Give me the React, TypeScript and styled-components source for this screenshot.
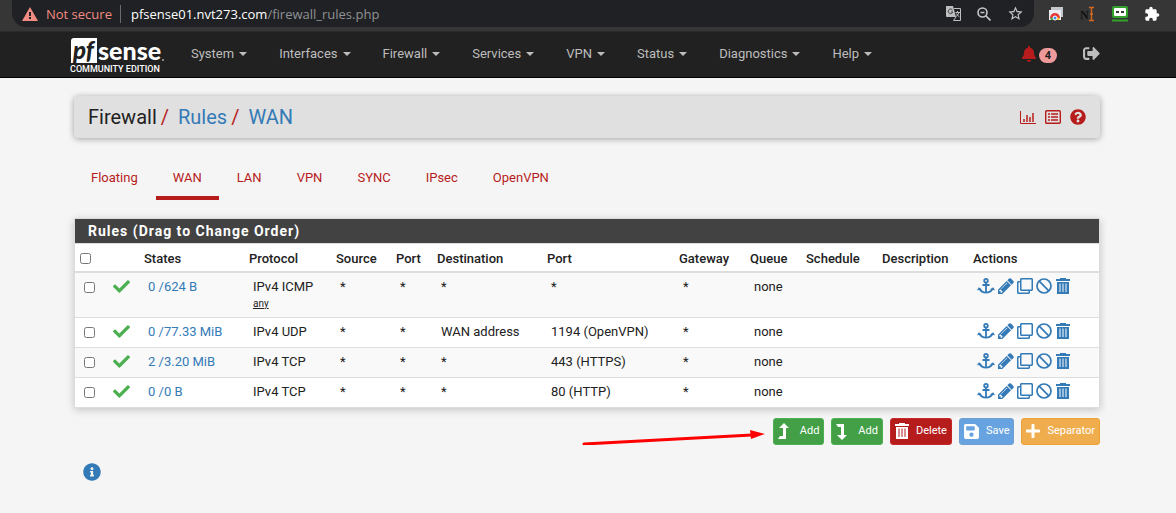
import React from "react";
import styled, { createGlobalStyle } from "styled-components";
import { FaRegClone, FaBell, FaSignOutAlt, FaQuestionCircle, FaInfoCircle, FaSave, FaCheck, FaPlus } from "react-icons/fa";
import { MdExtension, MdStarBorder } from "react-icons/md";

const red = "#b71c1c";
const blue = "#337ab7";

const Global = createGlobalStyle`
  * { box-sizing: border-box; }
  body { margin: 0; background: #f5f5f5; color: #212121; font: 13px/18px Roboto, sans-serif; }
  a { text-decoration: none; color: ${blue}; }
  svg { display: block; flex: none; }
`;

const BrowserBar = styled.div`
  display: flex;
  align-items: flex-start;
  height: 32px;
  padding: 0 16px 0 12px;
  background: #363636;
  border-bottom: 1px solid #2b2b2b;
`;
const AddressBar = styled.div`
  flex: 1;
  display: flex;
  align-items: center;
  height: 27px;
  padding: 0 10px;
  background: #202124;
  border-radius: 0 0 14px 14px;
  font: 13px/18px "Open Sans", sans-serif;
`;
const Insecure = styled.span`
  display: flex;
  align-items: center;
  gap: 8px;
  padding-right: 8px;
  margin-right: 10px;
  border-right: 1px solid #6a6b6e;
  color: #f28b82;
`;
const Url = styled.span`
  flex: 1;
  color: #ffffff;
  span { color: #8f9195; }
`;
const BarIcons = styled.div`
  display: flex;
  align-items: center;
  height: 27px;
  gap: 16px;
  color: #c6c7c9;
`;
const Extensions = styled(BarIcons)`
  padding-left: 14px;
`;

const NavBar = styled.nav`
  display: flex;
  align-items: flex-start;
  height: 46px;
  padding: 0 76px 0 69px;
  background: #212121;
  border-bottom: 1px solid #000;
`;
const Brand = styled.a`
  width: 96px;
  margin-right: 26px;
`;
const Menu = styled.ul`
  flex: 1;
  display: flex;
  gap: 32px;
  margin: 0;
  padding: 13px 0 0;
  list-style: none;
`;
const MenuLink = styled.a`
  display: flex;
  align-items: center;
  gap: 5px;
  color: #bdbdbd;
  &::after {
    content: "";
    border: 4px solid transparent;
    border-top-color: #bdbdbd;
    border-bottom: 0;
  }
`;
const NavTools = styled.div`
  display: flex;
  align-items: center;
  gap: 26px;
  padding-top: 12px;
`;
const Alerts = styled.a`
  display: flex;
  align-items: center;
  gap: 2px;
  color: ${red};
`;
const Badge = styled.span`
  margin-top: 4px;
  padding: 0 6px;
  border-radius: 8px;
  background: #ef9a9a;
  color: #212121;
  font-size: 11px;
  font-weight: 700;
  line-height: 15px;
`;

const Page = styled.main`
  padding: 18px 76px 20px 74px;
`;
const Crumbs = styled.header`
  display: flex;
  align-items: center;
  justify-content: space-between;
  height: 42px;
  padding: 0 14px;
  border-radius: 4px;
  background: #e0e0e0;
  box-shadow: 0 1px 6px rgba(0, 0, 0, 0.35);
`;
const CrumbList = styled.ol`
  display: flex;
  margin: 0;
  padding: 0;
  list-style: none;
  font-size: 20px;
  line-height: 24px;
  li + li::before {
    content: "/";
    padding: 0 9px 0 4px;
    color: ${red};
  }
`;
const CrumbTools = styled.div`
  display: flex;
  align-items: center;
  gap: 9px;
  a { color: ${red}; }
`;

const Tabs = styled.ul`
  display: flex;
  margin: 22px 0 18px;
  padding: 0;
  list-style: none;
`;
const Tab = styled.a<{ $active?: boolean }>`
  display: block;
  height: 40px;
  padding: 9px 17px 0;
  margin-right: 1px;
  border-bottom: 4px solid ${(p) => (p.$active ? red : "transparent")};
  color: ${red};
`;

const Panel = styled.section`
  border: 1px solid #ddd;
  background: #fff;
  box-shadow: 0 2px 8px rgba(0, 0, 0, 0.2);
`;
const PanelTitle = styled.h2`
  margin: 0;
  padding: 0 13px;
  background: #424242;
  color: #fff;
  font-size: 14px;
  font-weight: 700;
  line-height: 24px;
  letter-spacing: 1px;
`;
const Table = styled.table`
  width: 100%;
  table-layout: fixed;
  border-collapse: collapse;
  border-top: 1px solid #ddd;
`;
const Col = styled.col<{ $w: number }>`
  width: ${(p) => p.$w}px;
`;
const Th = styled.th`
  height: 28px;
  padding: 3px 0 0 5px;
  border-bottom: 2px solid #ddd;
  text-align: left;
  font-weight: 500;
  white-space: nowrap;
`;
const Row = styled.tr`
  &:nth-child(odd) { background: #f9f9f9; }
  & + & { border-top: 1px solid #ddd; }
`;
const Td = styled.td`
  padding: 5px 0 6px 9px;
  vertical-align: top;
  white-space: nowrap;
  small {
    display: block;
    font-size: 10px;
    line-height: 15px;
    text-decoration: underline;
  }
`;
const Check = styled.input`
  display: block;
  width: 11px;
  height: 11px;
  margin: 0;
`;
const RowCheck = styled(Check)`
  margin-top: 4px;
`;
const Actions = styled.div`
  display: flex;
  align-items: center;
  gap: 3px;
  height: 17px;
  a { display: block; }
`;

const Footer = styled.div`
  display: flex;
  justify-content: flex-end;
  gap: 7px;
  margin-top: 10px;
`;
const Btn = styled.button<{ $bg: string; $line: string }>`
  display: flex;
  align-items: center;
  gap: 6px;
  height: 27px;
  padding: 0 4px 0 3px;
  border: 1px solid ${(p) => p.$line};
  border-radius: 3px;
  background: ${(p) => p.$bg};
  color: #fff;
  font: 11px/16px Roboto, sans-serif;
  span { padding-bottom: 1px; }
`;
const AddBtn = styled(Btn)`
  gap: 11px;
`;
const InfoLink = styled.a`
  display: inline-block;
  margin: 18px 0 0 9px;
`;

const Anchor = () => (
  <svg width="18" height="16" viewBox="0 0 18 16" fill="none" stroke="currentColor" strokeWidth="1.800">
    <circle cx="9" cy="2.700" r="1.800" />
    <path d="M9 4.500V14.500M5.500 7H12.500" />
    <path d="M2.500 11Q4.500 14.600 9 14.600T15.500 11" />
    <path d="M0 12.300L1.800 9.300L5 11.500ZM18 12.300L16.200 9.300L13 11.500Z" fill="currentColor" stroke="none" />
  </svg>
);
const Pencil = () => (
  <svg width="16" height="16" viewBox="128 128 1536 1536" fill="currentColor">
    <path d="M491 1536l91-91-235-235-91 91v107h128v128h107zm523-928q0-22-22-22-10 0-17 7l-542 542q-7 7-7 17 0 22 22 22 10 0 17-7l542-542q7-7 7-17zm-54-192l416 416-832 832h-416v-416zm683 96q0 53-37 90l-166 166-416-416 166-165q36-38 90-38 53 0 91 38l235 234q37 39 37 91z" />
  </svg>
);
const Ban = () => (
  <svg width="16" height="16" viewBox="0 0 16 16" fill="none" stroke="currentColor" strokeWidth="1.700">
    <circle cx="8" cy="8" r="7" />
    <path d="M3.200 3.200L12.800 12.800" />
  </svg>
);
const Trash = () => (
  <svg width="16" height="16" viewBox="0 0 16 16" fill="currentColor" fillRule="evenodd">
    <path d="M5 0H11V1H15V3H1V1H5ZM2 4H14V16H2ZM4.500 5.500V14H5.500V5.500ZM7.500 5.500V14H8.500V5.500ZM10.500 5.500V14H11.500V5.500Z" />
  </svg>
);

const Logo = () => (
  <svg width="96" height="45" viewBox="0 0 96 45">
    <path d="M5 6H28V31H2V9Q2 6 5 6Z" fill="#fff" />
    <text x="4" y="27" fontFamily="Lato, sans-serif" fontSize="24" fontWeight="900" fontStyle="italic" fill="#212121">pf</text>
    <text x="29" y="28" fontFamily="Lato, sans-serif" fontSize="25" fontWeight="900" fill="#fff">sense</text>
    <circle cx="94" cy="28" r="1" fill="#aaa" />
    <text x="1" y="40" fontFamily="Roboto, sans-serif" fontSize="9" fontWeight="500" fill="#fff">COMMUNITY EDITION</text>
  </svg>
);

const columns: [string, number][] = [
  ["", 29], ["", 35], ["States", 105], ["Protocol", 87], ["Source", 60], ["Port", 41], ["Destination", 110],
  ["Port", 132], ["Gateway", 71], ["Queue", 56], ["Schedule", 76], ["Description", 91], ["Actions", 131],
];
const rules = [
  { states: "0 /624 B", protocol: "IPv4 ICMP", any: true, dest: "*", port: "*" },
  { states: "0 /77.33 MiB", protocol: "IPv4 UDP", dest: "WAN address", port: "1194 (OpenVPN)" },
  { states: "2 /3.20 MiB", protocol: "IPv4 TCP", dest: "*", port: "443 (HTTPS)" },
  { states: "0 /0 B", protocol: "IPv4 TCP", dest: "*", port: "80 (HTTP)" },
];
const menu = ["System", "Interfaces", "Firewall", "Services", "VPN", "Status", "Diagnostics", "Help"];
const tabs = ["Floating", "WAN", "LAN", "VPN", "SYNC", "IPsec", "OpenVPN"];

export default function App() {
  return (
    <>
      <Global />
      <BrowserBar>
        <AddressBar>
          <Insecure>
            <svg width="16" height="14" viewBox="0 0 16 14">
              <path d="M8 0L16 14H0Z" fill="#f28b82" />
              <path d="M7 5h2v4H7zM7 10h2v2H7z" fill="#202124" />
            </svg>
            Not secure
          </Insecure>
          <Url>pfsense01.nvt273.com<span>/firewall_rules.php</span></Url>
          <BarIcons>
            <svg width="15" height="15" viewBox="0 0 15 15">
              <path d="M0 0H7L10 11H1Q0 11 0 10Z" fill="#bdbec0" />
              <path d="M8 2.500H14.500V14.500H7.500L10 11" fill="none" stroke="#bdbec0" />
              <path d="M6.500 4A2.300 2.300 0 1 0 6.800 6H5" fill="none" stroke="#3c3d40" />
              <path d="M9.500 6.500h4.500M11.500 5v1.500M10 10.500Q12.500 9 13 6.500M10.500 7.500Q11 9 13.500 11" fill="none" stroke="#bdbec0" />
            </svg>
            <svg width="14" height="14" viewBox="0 0 14 14" fill="none" stroke="#c6c7c9" strokeWidth="1.600">
              <circle cx="5.500" cy="5.500" r="4.500" />
              <path d="M9 9l4.500 4.500M3.500 5.500h4" />
            </svg>
            <MdStarBorder size={17} />
          </BarIcons>
        </AddressBar>
        <Extensions>
          <svg width="16" height="14" viewBox="0 0 16 14">
            <path d="M3 0H15V10H3Z" fill="#c4c7cb" />
            <path d="M1 3H13V13H1Z" fill="#eceff1" />
            <path d="M2 11A5 5 0 0 1 12 11L9 12H5Z" fill="#e53935" />
            <path d="M2 11L3 13H7V10Z" fill="#43a047" />
            <path d="M12 11L11 13H7V10Z" fill="#fbc02d" />
            <circle cx="7" cy="11" r="2" fill="#4285f4" stroke="#fff" />
          </svg>
          <svg width="16" height="18" viewBox="0 0 16 18">
            <text x="0" y="14" fontFamily="Liberation Serif, serif" fontWeight="700" fontSize="12" fill="#111">N</text>
            <path d="M9 2.500h5M11.500 2.500v13M9 15.500h5M10 9h3" stroke="#d2691e" strokeWidth="1.400" />
          </svg>
          <svg width="16" height="16" viewBox="0 0 16 16">
            <rect width="16" height="12" rx="2" fill="#33a02c" />
            <rect x="2" y="2" width="12" height="8" rx="1" fill="#fff" />
            <path d="M4 5h3v2H4zM9 5h3v2H9z" fill="#333" />
            <path d="M0 13.500h16v2H0z" fill="#33a02c" />
          </svg>
          <MdExtension size={16} color="#fff" />
        </Extensions>
      </BrowserBar>

      <NavBar>
        <Brand href="#" aria-label="pfSense home"><Logo /></Brand>
        <Menu>
          {menu.map((m) => <li key={m}><MenuLink href="#">{m}</MenuLink></li>)}
        </Menu>
        <NavTools>
          <Alerts href="#"><FaBell size={16} /><Badge>4</Badge></Alerts>
          <a href="#" aria-label="Log out"><FaSignOutAlt size={17} color="#bdbdbd" /></a>
        </NavTools>
      </NavBar>

      <Page>
        <Crumbs>
          <CrumbList>
            <li>Firewall</li>
            <li><a href="#">Rules</a></li>
            <li><a href="#">WAN</a></li>
          </CrumbList>
          <CrumbTools>
            <a href="#" aria-label="Statistics">
              <svg width="16" height="13" viewBox="0 0 16 13" fill="none" stroke="currentColor">
                <path d="M0.500 0V12.500H16" />
                <path d="M4 8v3M7 4v7M10 6v5M13 2v9" strokeWidth="1.500" />
              </svg>
            </a>
            <a href="#" aria-label="Logs">
              <svg width="16" height="14" viewBox="0 0 16 14" fill="none" stroke="currentColor">
                <rect x="0.700" y="0.700" width="14.600" height="12.600" rx="1" strokeWidth="1.400" />
                <path d="M3 4h2M3 7h2M3 10h2M6 4h7M6 7h7M6 10h7" strokeWidth="1.500" />
              </svg>
            </a>
            <a href="#" aria-label="Help"><FaQuestionCircle size={16} /></a>
          </CrumbTools>
        </Crumbs>

        <Tabs>
          {tabs.map((t) => <li key={t}><Tab href="#" $active={t === "WAN"}>{t}</Tab></li>)}
        </Tabs>

        <Panel>
          <PanelTitle>Rules (Drag to Change Order)</PanelTitle>
          <Table>
            <colgroup>{columns.map(([, w], i) => <Col key={i} $w={w} />)}</colgroup>
            <thead>
              <tr>
                {columns.map(([label], i) => (
                  <Th key={i}>{i === 0 ? <Check type="checkbox" aria-label="Select all rules" /> : label}</Th>
                ))}
              </tr>
            </thead>
            <tbody>
              {rules.map((r, i) => (
                <Row key={i}>
                  <Td><RowCheck type="checkbox" aria-label={`Select rule ${i + 1}`} /></Td>
                  <Td><FaCheck size={17} color="#4caf50" /></Td>
                  <Td><a href="#">{r.states}</a></Td>
                  <Td>{r.protocol}{r.any && <small>any</small>}</Td>
                  <Td>*</Td>
                  <Td>*</Td>
                  <Td>{r.dest}</Td>
                  <Td>{r.port}</Td>
                  <Td>*</Td>
                  <Td>none</Td>
                  <Td />
                  <Td />
                  <Td>
                    <Actions>
                      <a href="#" aria-label="Anchor"><Anchor /></a>
                      <a href="#" aria-label="Edit"><Pencil /></a>
                      <a href="#" aria-label="Copy"><FaRegClone size={16} /></a>
                      <a href="#" aria-label="Disable"><Ban /></a>
                      <a href="#" aria-label="Delete"><Trash /></a>
                    </Actions>
                  </Td>
                </Row>
              ))}
            </tbody>
          </Table>
        </Panel>

        <Footer>
          <svg width="184" height="27" viewBox="0 0 184 27">
            <path d="M2 26L170 17" stroke="#f00" strokeWidth="3" strokeLinecap="round" />
            <path d="M168 12L183 16L169 21Z" fill="#f00" />
          </svg>
          <AddBtn type="button" $bg="#43a047" $line="#4caf50">
            <svg width="12" height="17" viewBox="0 0 12 17" fill="#fff"><path d="M7 0L12 5H9V16H1L3 13H6V5H2Z" /></svg>
            <span>Add</span>
          </AddBtn>
          <AddBtn type="button" $bg="#43a047" $line="#4caf50">
            <svg width="12" height="17" viewBox="0 0 12 17" fill="#fff"><path d="M7 17L12 12H9V1H1L3 4H6V12H2Z" /></svg>
            <span>Add</span>
          </AddBtn>
          <Btn type="button" $bg="#b71c1c" $line="#c62828"><Trash /><span>Delete</span></Btn>
          <Btn type="button" $bg="#67a3e0" $line="#6f9fce"><FaSave size={17} /><span>Save</span></Btn>
          <Btn type="button" $bg="#f0ad4e" $line="#eea236"><FaPlus size={16} /><span>Separator</span></Btn>
        </Footer>

        <InfoLink href="#" aria-label="Information"><FaInfoCircle size={18} /></InfoLink>
      </Page>
    </>
  );
}
